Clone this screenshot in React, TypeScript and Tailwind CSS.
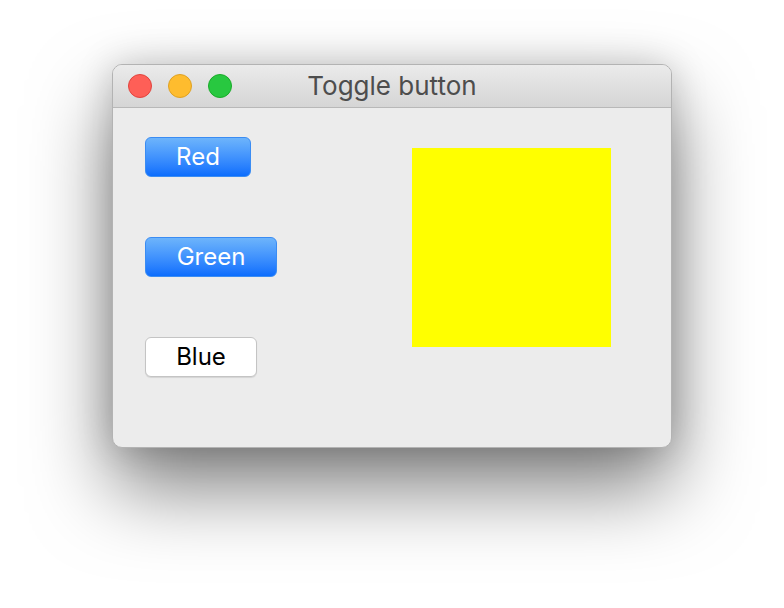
import React from "react";

export default function App() {
  const font = { fontFamily: "Inter, 'Helvetica Neue', 'Liberation Sans', sans-serif" };
  return (
    <div className="w-[784px] h-[608px] bg-white pt-[64px] pl-[112px]" style={font}>
      <div className="w-[560px] h-[384px] rounded-[10px] bg-[#ececec] border border-[#b3b3b3] shadow-[0_40px_80px_rgba(0,0,0,0.5),0_0_36px_rgba(0,0,0,0.18)] overflow-hidden flex flex-col">
        <div className="relative h-[43px] shrink-0 bg-gradient-to-b from-[#ebebeb] to-[#d5d5d5] border-b border-[#b8b8b8] flex items-center justify-center">
          <div className="absolute left-[15px] top-[9px] flex gap-[16px]">
            <div className="w-[24px] h-[24px] rounded-full bg-[#fe5f57] border border-[#e0443e]" />
            <div className="w-[24px] h-[24px] rounded-full bg-[#febc2e] border border-[#dea123]" />
            <div className="w-[24px] h-[24px] rounded-full bg-[#28c840] border border-[#1aab29]" />
          </div>
          <span className="text-[26px] text-[#4d4d4d] leading-none">Toggle button</span>
        </div>
        <div className="flex flex-1">
          <div className="flex flex-col gap-[60px] pl-[32px] pt-[29px] w-[299px]">
            <button className="w-[106px] h-[40px] rounded-[6px] bg-gradient-to-b from-[#6db4fb] to-[#0a6dfd] border border-[#3a8cf3] text-white text-[24px] leading-none">
              Red
            </button>
            <button className="w-[132px] h-[40px] rounded-[6px] bg-gradient-to-b from-[#6db4fb] to-[#0a6dfd] border border-[#3a8cf3] text-white text-[24px] leading-none">
              Green
            </button>
            <button className="w-[112px] h-[40px] rounded-[6px] bg-white border border-[#c4c4c4] shadow-[0_1px_1px_rgba(0,0,0,0.1)] text-black text-[24px] leading-none">
              Blue
            </button>
          </div>
          <div className="pt-[40px]">
            <div className="w-[199px] h-[199px] bg-[#ffff00]" />
          </div>
        </div>
      </div>
    </div>
  );
}
